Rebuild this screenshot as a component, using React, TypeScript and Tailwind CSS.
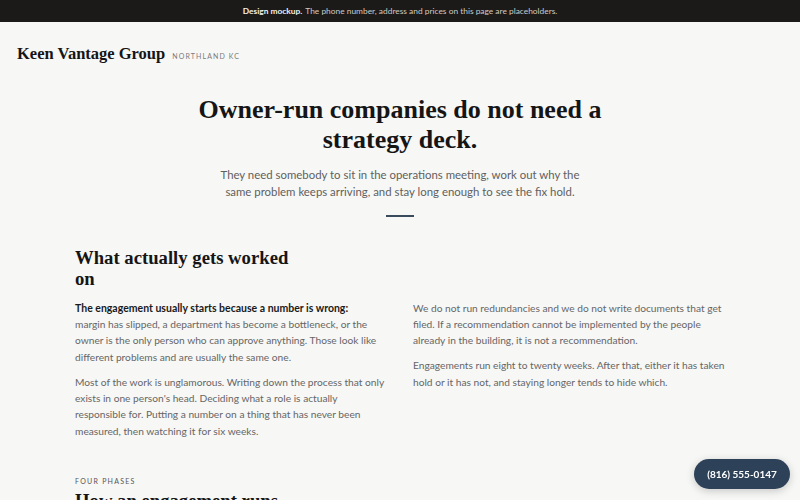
import React from "react";

const serif = { fontFamily: '"Liberation Serif", "DejaVu Serif", serif' };

export default function App() {
  return (
    <div className="h-[500px] overflow-hidden bg-[#f7f7f6] text-[#1a1a1a]" style={{ fontFamily: 'Lato, "Noto Sans", sans-serif' }}>
      <div className="h-[22px] bg-[#1c1a18] flex items-center justify-center text-[8.4px] text-[#cfcac2]">
        <span className="font-bold text-[#f3f0ea]">Design mockup.</span>
        <span className="ml-[3px]">The phone number, address and prices on this page are placeholders.</span>
      </div>

      <header className="flex items-end px-[17px] pt-[24px] pb-[22px]">
        <span className="text-[16.5px] font-bold leading-none text-[#151515]" style={serif}>Keen Vantage Group</span>
        <span className="ml-[7px] mb-[1px] text-[7px] tracking-[0.16em] text-[#7b7b7b]">NORTHLAND KC</span>
      </header>

      <section className="flex flex-col items-center text-center pt-[10px]">
        <h1 className="text-[26px] font-bold leading-[30px] text-[#151515] w-[420px]" style={serif}>
          Owner-run companies do not need a strategy deck.
        </h1>
        <p className="mt-[11px] w-[370px] text-[11.4px] leading-[17px] text-[#5f5f5f]">
          They need somebody to sit in the operations meeting, work out why the same problem keeps arriving, and stay long enough to see the fix hold.
        </p>
        <div className="mt-[15px] h-[2px] w-[28px] bg-[#3a4b5f]" />
      </section>

      <section className="mx-[75px] mt-[30px]">
        <h2 className="text-[18.7px] font-bold leading-[21px] w-[225px] text-[#151515]" style={serif}>
          What actually gets worked on
        </h2>
        <div className="mt-[11px] grid grid-cols-2 gap-x-[26px] text-[10.2px] leading-[16.4px] text-[#666]">
          <div className="flex flex-col gap-[8.4px]">
            <p>
              <strong className="block font-bold text-[10.5px] text-[#1a1a1a]">The engagement usually starts because a number is wrong:</strong>
              margin has slipped, a department has become a bottleneck, or the owner is the only person who can approve anything. Those look like different problems and are usually the same one.
            </p>
            <p>
              Most of the work is unglamorous. Writing down the process that only exists in one person's head. Deciding what a role is actually responsible for. Putting a number on a thing that has never been measured, then watching it for six weeks.
            </p>
          </div>
          <div className="flex flex-col gap-[8.4px]">
            <p>
              We do not run redundancies and we do not write documents that get filed. If a recommendation cannot be implemented by the people already in the building, it is not a recommendation.
            </p>
            <p>
              Engagements run eight to twenty weeks. After that, either it has taken hold or it has not, and staying longer tends to hide which.
            </p>
          </div>
        </div>

        <div className="mt-[37px] text-[7px] leading-[10px] tracking-[0.18em] text-[#555]">FOUR PHASES</div>
        <h2 className="mt-[4px] text-[18.7px] font-bold leading-[21px] text-[#151515]" style={serif}>
          How an engagement runs
        </h2>
      </section>

      <a className="fixed right-[10px] bottom-[11px] flex h-[30px] w-[96px] items-center justify-center rounded-full bg-[#2d4158] text-[10px] font-bold text-white shadow-[0_2px_8px_rgba(0,0,0,0.2)]">
        (816) 555-0147
      </a>
    </div>
  );
}
